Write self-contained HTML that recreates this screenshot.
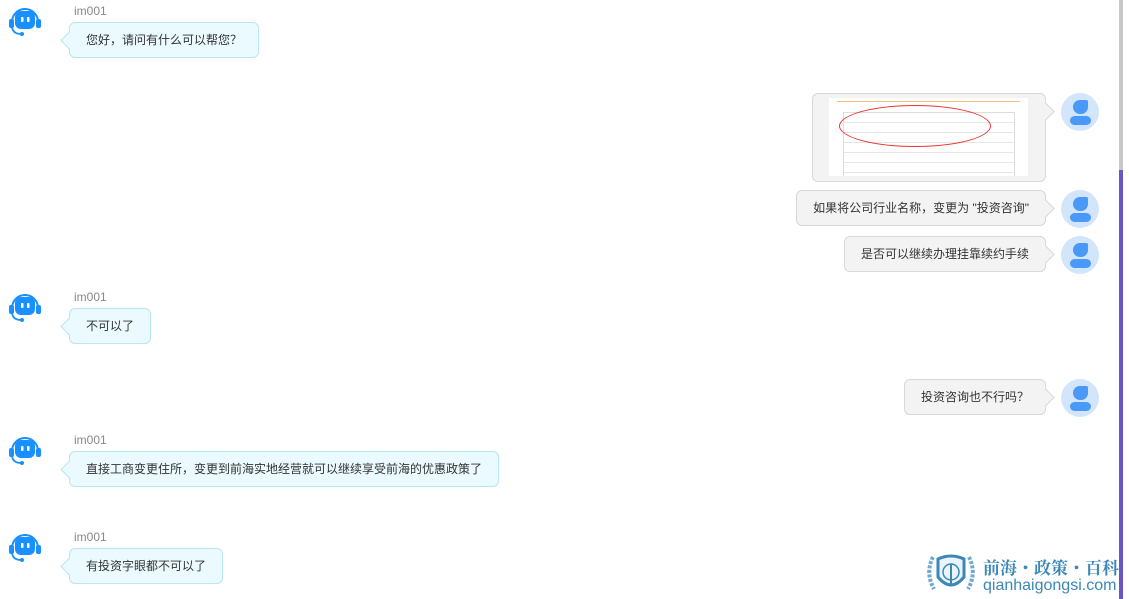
<!DOCTYPE html><html><head><meta charset="utf-8"><style>
body{margin:0;width:1129px;height:599px;background:#fff;position:relative;overflow:hidden;font-family:"Liberation Sans","Noto Sans CJK SC",sans-serif;font-size:12px;color:#333}
.a{position:absolute}
.name{position:absolute;left:74px;font-size:12px;color:#888}
.bb{position:absolute;left:69px;line-height:34px;padding:0 16px;background:#eafafe;border:1px solid #b9e6f2;border-radius:6px;box-sizing:border-box;height:36px;white-space:nowrap}
.bb:before{content:"";position:absolute;left:-7px;top:11px;width:12px;height:12px;background:#eafafe;border-left:1px solid #b9e6f2;border-bottom:1px solid #b9e6f2;transform:rotate(45deg)}
.rb{position:absolute;right:83px;height:36px;line-height:34px;padding:0 16px;background:#f3f3f3;border:1px solid #d8d8d8;border-radius:6px;box-sizing:border-box;white-space:nowrap}
.rb:after{content:"";position:absolute;right:-7px;top:11px;width:12px;height:12px;background:#f3f3f3;border-right:1px solid #d8d8d8;border-top:1px solid #d8d8d8;transform:rotate(45deg)}
.ua{position:absolute;left:1061px;width:38px;height:38px;border-radius:50%;background:#d2e5fb}
.ua i{position:absolute;left:12px;top:7px;width:15px;height:14px;background:#4a98f7;border-radius:8px 2px 8px 8px}
.ua b{position:absolute;left:9px;top:23px;width:21px;height:9px;background:#4a98f7;border-radius:5px}
</style></head><body>
<div class="a" style="left:1119px;top:0;width:4px;height:170px;background:#c8c8c8"></div>
<div class="a" style="left:1119px;top:170px;width:4px;height:429px;background:#6a55c8"></div>

<svg width="0" height="0" style="position:absolute"><defs><g id="bot"><path d="M4 15 A13 13 0 0 1 30 15" fill="none" stroke="#1890ff" stroke-width="2"/><rect x="7" y="4" width="20" height="18" rx="6" fill="#1890ff"/><rect x="13" y="10" width="2.5" height="5" rx="1" fill="#fff"/><rect x="19" y="10" width="2.5" height="5" rx="1" fill="#fff"/><rect x="1" y="12" width="5" height="9" rx="2" fill="#1890ff"/><rect x="28" y="12" width="5" height="9" rx="2" fill="#1890ff"/><path d="M4 20 Q5 27 13 27" fill="none" stroke="#1890ff" stroke-width="1.8"/><circle cx="14" cy="27" r="2" fill="#1890ff"/></g></defs></svg>

<svg class="a" style="left:8px;top:7px" width="34" height="31"><use href="#bot"/></svg>
<div class="name" style="top:4px">im001</div>
<div class="bb" style="top:22px">您好，请问有什么可以帮您？</div>

<div class="rb" style="top:93px;width:234px;height:89px;padding:0"></div>
<div class="a" style="left:829px;top:98px;width:199px;height:78px;background:#fff;overflow:hidden">
<div class="a" style="left:8px;top:3px;width:183px;height:1px;background:#f5c27a"></div>
<div class="a" style="left:14px;top:14px;width:170px;height:64px;border:1px solid #ddd;background:repeating-linear-gradient(#fff 0,#fff 9px,#e6e6e6 9px,#e6e6e6 10px)"></div>
<div class="a" style="left:10px;top:7px;width:150px;height:40px;border:1px solid #e33;border-radius:50%"></div>
</div>
<div class="ua" style="top:93px"><i></i><b></b></div>

<div class="rb" style="top:190px">如果将公司行业名称，变更为 "投资咨询"</div>
<div class="ua" style="top:190px"><i></i><b></b></div>
<div class="rb" style="top:236px">是否可以继续办理挂靠续约手续</div>
<div class="ua" style="top:236px"><i></i><b></b></div>

<svg class="a" style="left:8px;top:293px" width="34" height="31"><use href="#bot"/></svg>
<div class="name" style="top:290px">im001</div>
<div class="bb" style="top:308px">不可以了</div>

<div class="rb" style="top:379px">投资咨询也不行吗？</div>
<div class="ua" style="top:379px"><i></i><b></b></div>

<svg class="a" style="left:8px;top:436px" width="34" height="31"><use href="#bot"/></svg>
<div class="name" style="top:433px">im001</div>
<div class="bb" style="top:451px">直接工商变更住所，变更到前海实地经营就可以继续享受前海的优惠政策了</div>

<svg class="a" style="left:8px;top:533px" width="34" height="31"><use href="#bot"/></svg>
<div class="name" style="top:530px">im001</div>
<div class="bb" style="top:548px">有投资字眼都不可以了</div>

<svg class="a" style="left:924px;top:551px" width="54" height="46"><path d="M9 6 Q1 22 10 38 M45 6 Q53 22 44 38" fill="none" stroke="#6fa8d0" stroke-width="4" stroke-dasharray="3 1.5"/><path d="M14 8 Q27 2 40 8 L40 26 Q27 42 14 26 Z" fill="#eaf4fa" stroke="#3a87b8" stroke-width="3"/><circle cx="27" cy="21" r="8" fill="none" stroke="#3a87b8" stroke-width="1.5"/><path d="M27 13 L27 34" stroke="#3a87b8" stroke-width="2"/></svg>
<div class="a" style="left:983px;top:554px;font-family:'Noto Serif CJK SC',serif;font-weight:bold;font-size:17px;color:#3a87b8;white-space:nowrap">前海・政策・百科</div>
<div class="a" style="left:983px;top:577px;font-size:16px;color:#3a87b8;white-space:nowrap">qianhaigongsi.com</div>
</body></html>
